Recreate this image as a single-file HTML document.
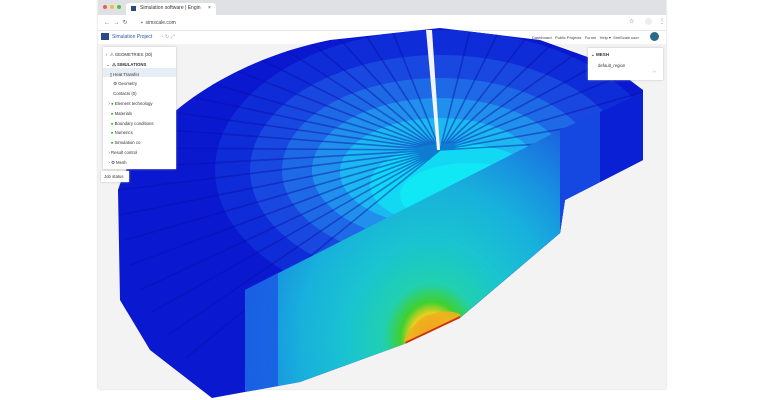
<!DOCTYPE html>
<html><head><meta charset="utf-8"><style>
body{margin:0;width:780px;height:400px;background:#fff;overflow:hidden;font-family:"Liberation Sans",sans-serif;position:relative}
.abs{position:absolute}
.t{font-size:4.5px;color:#333;white-space:nowrap}
</style></head><body>
<div class="abs" style="left:98px;top:0;width:568px;height:389px;background:#f3f3f3;box-shadow:0 0 2px #ccc"></div>
<div class="abs" style="left:98px;top:0;width:568px;height:15px;background:#dfe1e5"></div>
<div class="abs" style="left:103px;top:5px;width:4px;height:4px;border-radius:50%;background:#ee5b55"></div>
<div class="abs" style="left:110px;top:5px;width:4px;height:4px;border-radius:50%;background:#f4bb3a"></div>
<div class="abs" style="left:117px;top:5px;width:4px;height:4px;border-radius:50%;background:#4fc13e"></div>
<div class="abs" style="left:126px;top:3px;width:90px;height:12px;background:#fff;border-radius:3px 3px 0 0"></div>
<div class="abs" style="left:131px;top:6px;width:5px;height:5px;background:#2a4a7a"></div>
<div class="abs t" style="left:140px;top:5px;font-size:5px">Simulation software | Engin</div>
<div class="abs t" style="left:208px;top:5px;font-size:5px">×</div>
<div class="abs" style="left:98px;top:15px;width:568px;height:15px;background:#fff;border-bottom:1px solid #e6e6e6"></div>
<div class="abs t" style="left:104px;top:19px;font-size:6px;color:#666">←&nbsp; →&nbsp; ↻</div>
<div class="abs t" style="left:141px;top:19.5px;font-size:5px;color:#444">▪&nbsp; simscale.com</div>
<div class="abs t" style="left:629px;top:18px;font-size:6px;color:#666">☆</div>
<div class="abs" style="left:645px;top:18px;width:7px;height:7px;border-radius:50%;background:#eee"></div>
<div class="abs t" style="left:659px;top:18px;font-size:6px;color:#666">⋮</div>
<div class="abs" style="left:98px;top:31px;width:568px;height:13px;background:#fff"></div>
<div class="abs" style="left:101px;top:33px;width:8px;height:7px;background:#2a4a8a"></div>
<div class="abs t" style="left:112px;top:34px;font-size:5px;color:#2a5aa8">Simulation Project</div>
<div class="abs t" style="left:162px;top:34px;font-size:5px;color:#999">‹ ↻ ⤢</div>
<div class="abs t" style="left:532px;top:35px;font-size:4px;color:#444">Dashboard &nbsp; Public Projects &nbsp; Forum &nbsp; Help ▾ &nbsp;SimScale user</div>
<div class="abs" style="left:650px;top:32px;width:9px;height:9px;border-radius:50%;background:#2a6a8a"></div>
<svg class="abs" style="left:0;top:0" width="780" height="400" viewBox="0 0 780 400">
<defs>
<radialGradient id="hot" gradientUnits="userSpaceOnUse" cx="432" cy="338" r="240" gradientTransform="translate(432 338) scale(1 1.15) translate(-432 -338)">
<stop offset="0" stop-color="#e02010"/><stop offset="0.05" stop-color="#f07010"/><stop offset="0.09" stop-color="#e8d020"/>
<stop offset="0.13" stop-color="#40d030"/><stop offset="0.2" stop-color="#20d0b0"/><stop offset="0.35" stop-color="#1ac4d0"/>
<stop offset="0.55" stop-color="#18b0dc"/><stop offset="0.72" stop-color="#1890e0"/><stop offset="0.88" stop-color="#1a6ce0"/><stop offset="1" stop-color="#1a50e0"/>
</radialGradient>
<clipPath id="fan"><path d="M118 190 C140 120 230 60 330 40 L440 28 L540 40 L610 65 L643 90 L643 160 L565 200 L560 233 L460 318 L407 343 L300 382 L212 398 L150 350 L120 300 Z"/></clipPath>
</defs>
<path d="M118 190 C140 120 230 60 330 40 L440 28 L540 40 L610 65 L643 90 L643 160 L565 200 L560 233 L460 318 L407 343 L300 382 L212 398 L150 350 L120 300 Z" fill="#0a18d0"/>
<g clip-path="url(#fan)">
<ellipse cx="440" cy="170" rx="225" ry="140" fill="#0e2cd8"/>
<ellipse cx="440" cy="170" rx="190" ry="115" fill="#1848e0"/>
<ellipse cx="440" cy="170" rx="158" ry="92" fill="#1e6ae6"/>
<ellipse cx="440" cy="170" rx="128" ry="72" fill="#2090ec"/>
<ellipse cx="440" cy="172" rx="100" ry="54" fill="#1cb8f0"/>
<ellipse cx="455" cy="185" rx="85" ry="42" fill="#12d8f4"/>
<ellipse cx="470" cy="195" rx="70" ry="32" fill="#10e8f6"/>
<g stroke="#0a10a8" stroke-width="1.6" opacity="0.45">
<path d="M440 150 L118 190 M440 150 L120 215 M440 150 L125 240 M440 150 L130 265 M440 150 L140 290 M440 150 L152 312 M440 150 L168 335 M440 150 L186 358 M440 150 L122 168 M440 150 L130 148 M440 150 L142 128 M440 150 L158 110 M440 150 L178 94 M440 150 L200 80 M440 150 L225 66 M440 150 L252 55 M440 150 L280 46 M440 150 L308 40 M440 150 L336 35 M440 150 L364 32 M440 150 L392 30 M440 150 L470 30 M440 150 L498 33 M440 150 L526 38 M440 150 L552 44 M440 150 L578 52 M440 150 L602 62 M440 150 L625 74 M440 150 L643 92 M440 150 L643 115 M440 150 L643 138"/>
</g>
<path d="M426 30 L432 30 L440 150 L437 150 Z" fill="#f3f3f3"/>
<path d="M560 130 L643 92 L643 160 L565 200 L560 233 Z" fill="#1448e0"/>
<path d="M600 112 L643 92 L643 160 L600 182 Z" fill="#0a20d4"/>
<path d="M245 290 L560 130 L560 233 L460 318 L407 343 L300 382 L280 395 L245 395 Z" fill="url(#hot)"/>
<path d="M245 290 L278 273 L278 392 L245 395 Z" fill="#1a5ae4" opacity="0.85"/>
<path d="M404 340 C414 318 440 306 460 314 L460 319 L408 345 Z" fill="#f0b020" opacity="0.9"/>
<path d="M405 342 L460 316 L460 320 L408 346 Z" fill="#d03010"/>
</g>
</svg>
<div class="abs" style="left:103px;top:47px;width:73px;height:122px;background:#fff;box-shadow:0 0 2px #bbb"></div>
<div class="abs" style="left:103px;top:68px;width:73px;height:9px;background:#e6eef5"></div>
<div class="abs t" style="left:106px;top:50px;line-height:9.8px;font-size:4.3px">
› &nbsp;⚠ GEOMETRIES (30) <br>⌄ &nbsp;<b>⚠ SIMULATIONS</b><br>&nbsp;&nbsp;&nbsp;▯ Heat Transfer<br>&nbsp;&nbsp;&nbsp;&nbsp;&nbsp;&nbsp;⚙ Geometry<br>&nbsp;&nbsp;&nbsp;&nbsp;&nbsp; Contacts (0)<br>&nbsp;&nbsp;› <span style="color:#2a2">●</span> Element technology<br>&nbsp;&nbsp;&nbsp;&nbsp;<span style="color:#2a2">●</span> Materials<br>&nbsp;&nbsp;&nbsp;&nbsp;<span style="color:#2a2">●</span> Boundary conditions<br>&nbsp;&nbsp;&nbsp;&nbsp;<span style="color:#2a2">●</span> Numerics<br>&nbsp;&nbsp;&nbsp;&nbsp;<span style="color:#2a2">●</span> Simulation co<br>&nbsp;&nbsp;› Result control<br>&nbsp;&nbsp;› ⚙ Mesh<br>&nbsp;&nbsp;&nbsp;&nbsp;<span style="color:#2a2">●</span> Sim</div>
<div class="abs" style="left:101px;top:171px;width:28px;height:11px;background:#fff;box-shadow:0 0 2px #bbb"></div>
<div class="abs t" style="left:104px;top:174px;font-size:4.3px">Job status</div>
<div class="abs" style="left:588px;top:48px;width:75px;height:32px;background:#fff;box-shadow:0 0 2px #bbb"></div>
<div class="abs t" style="left:591px;top:52px;font-size:4.5px"><b>⌄ MESH</b></div>
<div class="abs t" style="left:598px;top:63px;font-size:4.3px">default_region</div>
<div class="abs t" style="left:653px;top:69px;font-size:4.3px;color:#999">‹›</div>
</body></html>
